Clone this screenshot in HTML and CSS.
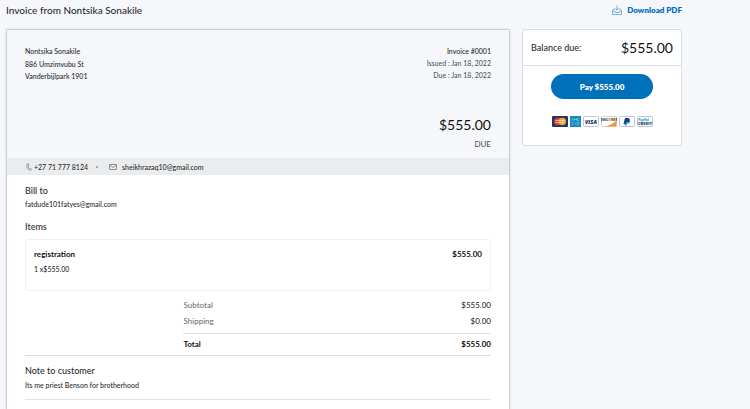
FILE: index.html
```html
<!DOCTYPE html>
<html lang="en">
<head>
  <meta charset="UTF-8">
  <meta name="viewport" content="width=device-width, initial-scale=1.0">
  <title>Invoice from Nontsika Sonakile</title>
  <link rel="stylesheet" href="styles.css">
</head>
<body>
  <header class="topbar">
    <h1>Invoice from Nontsika Sonakile</h1>
    <a class="download" href="#">
      <svg width="10" height="10" viewBox="0 0 20 20" fill="none" stroke="#4c93cb" stroke-width="1.4">
        <path d="M6 8H3.500L1 12V19H19V12L16.500 8H14M1 13H5L6 15H14L15 13H19M10 1V10M7 7L10 10L13 7"/>
      </svg>
      Download PDF
    </a>
  </header>

  <main class="layout">
    <section class="invoice">
      <div class="invoice-head">
        <div class="sender">
          <p class="sender-name">Nontsika Sonakile</p>
          <p>886 Umzimvubu St</p>
          <p>Vanderbijlpark 1901</p>
        </div>
        <div class="meta">
          <p class="meta-number">Invoice #0001</p>
          <p>Issued : Jan 18, 2022</p>
          <p>Due : Jan 18, 2022</p>
          <p class="amount">$555.00</p>
          <p class="due">DUE</p>
        </div>
      </div>

      <div class="contact">
        <svg width="6" height="8" viewBox="0 0 12 16" fill="none" stroke="#6c7378" stroke-width="1.300">
          <path d="M4.500 1L2.500 2C-.5 6 3 13 8 15L11 13L8.500 10L6.500 11C5 10 4 8 4 6L6 5Z"/>
        </svg>
        <span class="phone">+27 71 777 8124</span>
        <span class="dot"></span>
        <svg width="8" height="6" viewBox="0 0 16 12" fill="none" stroke="#6c7378" stroke-width="1.500">
          <rect x="1" y="1" width="14" height="10" rx="1"/>
          <path d="M1 2L8 7L15 2"/>
        </svg>
        <span class="email">sheikhrazaq10@gmail.com</span>
      </div>

      <div class="invoice-body">
        <h2>Bill to</h2>
        <p class="bill-email">fatdude101fatyes@gmail.com</p>

        <h2>Items</h2>
        <div class="item">
          <div class="item-row">
            <span>registration</span>
            <span>$555.00</span>
          </div>
          <p>1 x$555.00</p>
        </div>

        <table class="totals">
          <tbody>
            <tr><th scope="row">Subtotal</th><td>$555.00</td></tr>
            <tr><th scope="row">Shipping</th><td>$0.00</td></tr>
          </tbody>
          <tfoot>
            <tr><th scope="row">Total</th><td>$555.00</td></tr>
          </tfoot>
        </table>

        <div class="note">
          <h2>Note to customer</h2>
          <p>Its me priest Benson for brotherhood</p>
        </div>
      </div>
    </section>

    <aside class="payment">
      <div class="balance">
        <span>Balance due:</span>
        <span class="balance-amount">$555.00</span>
      </div>
      <div class="pay">
        <button type="button">Pay $555.00</button>
        <div class="cards">
          <svg width="16" height="11" viewBox="0 0 32 22">
            <rect width="32" height="22" rx="2" fill="#20346b"/>
            <circle cx="11.500" cy="11" r="7.500" fill="#e2392d"/>
            <circle cx="20.500" cy="11" r="7.500" fill="#f3a53a"/>
            <path d="M7 9H25M7 13H25" stroke="#fbe3c4" stroke-width="1.500"/>
          </svg>
          <svg width="11" height="11" viewBox="0 0 22 22">
            <rect width="22" height="22" rx="1" fill="#1688bd"/>
            <path d="M3 9L5 5L7 9M9 9V5L11 8L13 5V9M19 5H15V9H19M3 13H7M3 17H7M9 13L13 17M13 13L9 17M19 13H15V17H19" fill="none" stroke="#8bd0ea" stroke-width="1.300"/>
          </svg>
          <svg width="16" height="11" viewBox="0 0 32 22">
            <rect x="1" y="1" width="30" height="20" rx="2" fill="#fff" stroke="#a9b0c4" stroke-width="1.500"/>
            <text x="16" y="15" class="visa">VISA</text>
          </svg>
          <svg width="16" height="11" viewBox="0 0 32 22">
            <rect x="1" y="1" width="30" height="20" rx="2" fill="#fff" stroke="#c4c4c4" stroke-width="1.500"/>
            <path d="M31 9V21H7C18 19 26 14 31 9Z" fill="#f29a3c"/>
            <text x="16" y="10" class="discover">DISC<tspan fill="#ef8424">O</tspan>VER</text>
          </svg>
          <svg width="16" height="11" viewBox="0 0 32 22">
            <rect x="1" y="1" width="30" height="20" rx="2" fill="#fff" stroke="#a9b0c4" stroke-width="1.500"/>
            <path d="M14 8H20C24 8 23 15 17 15H16L15 19H11Z" fill="#179bd7"/>
            <path d="M12 4H18C23 4 23 12 16 12H14L13 16H9Z" fill="#20387d"/>
          </svg>
          <svg width="16" height="11" viewBox="0 0 32 22">
            <rect x="1" y="1" width="30" height="20" rx="2" fill="#fff" stroke="#a9b0c4" stroke-width="1.500"/>
            <text x="13" y="9" class="paypal">PayPal</text>
            <text x="16" y="18" class="credit">CREDIT</text>
          </svg>
        </div>
      </div>
    </aside>
  </main>
</body>
</html>
```
FILE: styles.css
```css
* {
  box-sizing: border-box;
}
body {
  margin: 0;
  min-height: 100vh;
  display: flex;
  flex-direction: column;
  padding: 0 68px 0 6px;
  background: #f5f7fa;
  color: #2c2e2f;
  font-family: Lato, sans-serif;
  font-size: 7px;
  font-weight: 500;
  line-height: 12px;
}
h1, h2, p {
  margin: 0;
}
.topbar {
  display: flex;
  justify-content: space-between;
  align-items: center;
  height: 20px;
  margin-bottom: 9px;
}
h1 {
  font-size: 10px;
  font-weight: 500;
}
.download {
  display: flex;
  align-items: center;
  gap: 5px;
  color: #0070ba;
  font-size: 8px;
  font-weight: 800;
  text-decoration: none;
}
.layout {
  flex: 1;
  display: grid;
  grid-template-columns: 1fr 160px;
  gap: 12px;
}
.invoice {
  border: 1px solid #cbd2d6;
  border-bottom: 0;
  border-radius: 2px 2px 0 0;
  background: #fff;
  box-shadow: 0 0 2px #cbd2d6;
}
.invoice-head {
  display: flex;
  justify-content: space-between;
  padding: 15px 18px 8px;
  background: #f5f7fa;
}
.sender-name {
  margin-bottom: 1px;
}
.meta {
  color: #515b62;
  text-align: right;
}
.meta-number {
  color: #2c2e2f;
}
.amount {
  margin-top: 31px;
  color: #111;
  font-size: 14px;
  font-weight: 400;
  line-height: 26px;
}
.due {
  font-size: 8px;
}
.contact {
  display: flex;
  align-items: center;
  height: 17px;
  padding: 0 19px;
  background: #eaecee;
}
.phone {
  margin-left: 2px;
}
.dot {
  width: 2px;
  height: 2px;
  margin: 0 11px 0 8px;
  border-radius: 50%;
  background: #8c9296;
}
.email {
  margin-left: 5px;
}
.invoice-body {
  padding: 8px 18px;
}
h2 {
  font-size: 9px;
  font-weight: 500;
  line-height: 15px;
}
.bill-email {
  margin-bottom: 9px;
}
.item {
  min-height: 52px;
  margin-top: 5px;
  padding: 8px;
  border: 1px solid #eff0f1;
  border-radius: 3px;
}
.item-row {
  display: flex;
  justify-content: space-between;
  margin-bottom: 3px;
  color: #111;
  font-size: 8px;
  font-weight: 700;
}
.totals {
  width: 66%;
  margin: 6px 0 0 auto;
  border-collapse: collapse;
  font-size: 8px;
}
.totals th,
.totals td {
  height: 16px;
  padding: 0;
  font-weight: 500;
  text-align: right;
}
.totals th {
  color: #6c7378;
  text-align: left;
}
.totals tfoot {
  border-top: 1px solid #dfe3e5;
}
.totals tfoot th,
.totals tfoot td {
  height: 22px;
  color: #111;
  font-weight: 700;
}
.totals tbody tr:last-child td {
  height: 20px;
  padding-bottom: 4px;
}
.totals tbody tr:last-child th {
  padding-bottom: 4px;
}
.note {
  padding: 7px 0 8px;
  border-top: 1px solid #d9dddf;
  border-bottom: 1px solid #dfe5e5;
}
.note h2 {
  margin-bottom: 1px;
}
.payment {
  align-self: start;
  border: 1px solid #dadfe2;
  border-radius: 3px;
  background: #fff;
}
.balance {
  display: flex;
  justify-content: space-between;
  align-items: center;
  height: 36px;
  padding: 0 8px;
  border-bottom: 1px solid #dadfe2;
  font-size: 9px;
}
.balance-amount {
  color: #111;
  font-size: 14px;
  font-weight: 400;
}
.pay {
  padding: 8px 8px 18px;
  text-align: center;
}
.pay button {
  width: 102px;
  height: 25px;
  border: 0;
  border-radius: 13px;
  background: #0070ba;
  color: #fff;
  font-family: inherit;
  font-size: 8px;
  font-weight: 800;
  cursor: pointer;
}
.cards {
  display: flex;
  justify-content: center;
  gap: 2px;
  margin-top: 17px;
}
.cards text {
  font-family: "Open Sans", sans-serif;
  font-weight: 800;
  text-anchor: middle;
  fill: #20346b;
}
.cards .visa {
  font-size: 11px;
  font-style: italic;
}
.cards .discover {
  font-size: 7px;
  fill: #444;
}
.cards .paypal {
  font-size: 6px;
  fill: #179bd7;
}
.cards .credit {
  font-size: 8px;
}
```
